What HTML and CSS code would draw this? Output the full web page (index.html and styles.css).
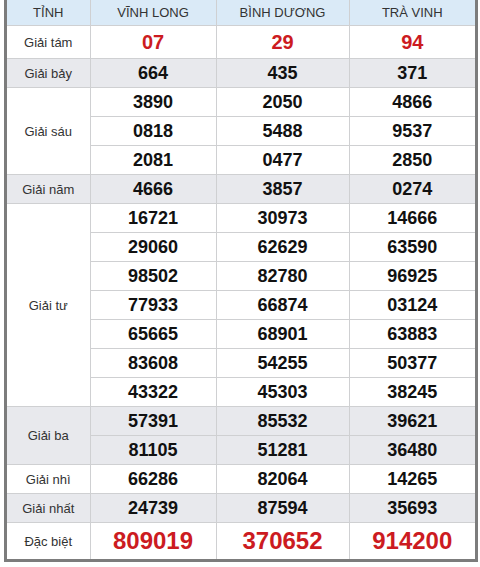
FILE: index.html
```html
<!DOCTYPE html>
<html lang="vi">
<head>
<meta charset="utf-8">
<title>XSMN</title>
<link rel="stylesheet" href="styles.css">
</head>
<body>
<div class="frame">
<table class="kq">
<colgroup><col class="c1"><col class="c2"><col class="c3"><col class="c4"></colgroup>
<thead>
<tr class="head"><th>TỈNH</th><th>VĨNH LONG</th><th>BÌNH DƯƠNG</th><th>TRÀ VINH</th></tr>
</thead>
<tbody>
<tr class="r8"><td class="lbl">Giải tám</td><td class="red8">07</td><td class="red8">29</td><td class="red8">94</td></tr>
<tr class="alt"><td class="lbl">Giải bảy</td><td>664</td><td>435</td><td>371</td></tr>
<tr><td class="lbl" rowspan="3">Giải sáu</td><td>3890</td><td>2050</td><td>4866</td></tr>
<tr><td>0818</td><td>5488</td><td>9537</td></tr>
<tr><td>2081</td><td>0477</td><td>2850</td></tr>
<tr class="alt"><td class="lbl">Giải năm</td><td>4666</td><td>3857</td><td>0274</td></tr>
<tr><td class="lbl" rowspan="7">Giải tư</td><td>16721</td><td>30973</td><td>14666</td></tr>
<tr><td>29060</td><td>62629</td><td>63590</td></tr>
<tr><td>98502</td><td>82780</td><td>96925</td></tr>
<tr><td>77933</td><td>66874</td><td>03124</td></tr>
<tr><td>65665</td><td>68901</td><td>63883</td></tr>
<tr><td>83608</td><td>54255</td><td>50377</td></tr>
<tr><td>43322</td><td>45303</td><td>38245</td></tr>
<tr class="alt"><td class="lbl" rowspan="2">Giải ba</td><td>57391</td><td>85532</td><td>39621</td></tr>
<tr class="alt"><td>81105</td><td>51281</td><td>36480</td></tr>
<tr><td class="lbl">Giải nhì</td><td>66286</td><td>82064</td><td>14265</td></tr>
<tr class="alt"><td class="lbl">Giải nhất</td><td>24739</td><td>87594</td><td>35693</td></tr>
<tr class="rdb"><td class="lbl">Đặc biệt</td><td class="reddb">809019</td><td class="reddb">370652</td><td class="reddb">914200</td></tr>
</tbody>
</table>
</div>
</body>
</html>
```
FILE: styles.css
```css
html, body {
  margin: 0;
  padding: 0;
  background: #ffffff;
}
.frame {
  margin-left: 4px;
  width: 468px;
  border-left: 3px solid #7c7c7c;
  border-right: 3px solid #7c7c7c;
  border-bottom: 3px solid #7c7c7c;
  background: #ffffff;
}
.kq {
  width: 468px;
  table-layout: fixed;
  border-collapse: collapse;
  font-family: "Liberation Sans", Arial, sans-serif;
}
.c1 { width: 83px; }
.c2 { width: 126px; }
.c3 { width: 133px; }
.c4 { width: 126px; }
.kq th, .kq td {
  padding: 0;
  border: 1px solid #cfd0d2;
  text-align: center;
  vertical-align: middle;
  height: 28px;
  font-size: 18px;
  font-weight: bold;
  color: #111111;
}
.kq tr > :first-child { border-left: none; }
.kq tr > :last-child { border-right: none; }
.kq td.lbl { border-left: none; }
.kq thead th {
  border-top: none;
  height: 25px;
  background: #daeaf7;
  font-size: 13px;
  font-weight: normal;
  color: #333333;
}
.kq td.lbl {
  font-size: 13px;
  font-weight: normal;
  color: #333333;
}
.alt td { background: #e8e9ed; }
.r8 td { height: 32px; }
.red8 {
  font-size: 20px !important;
  color: #cc1b21 !important;
}
.rdb td { height: 36px; border-bottom: none; }
.reddb {
  font-size: 24px !important;
  color: #cc1b21 !important;
}
```
